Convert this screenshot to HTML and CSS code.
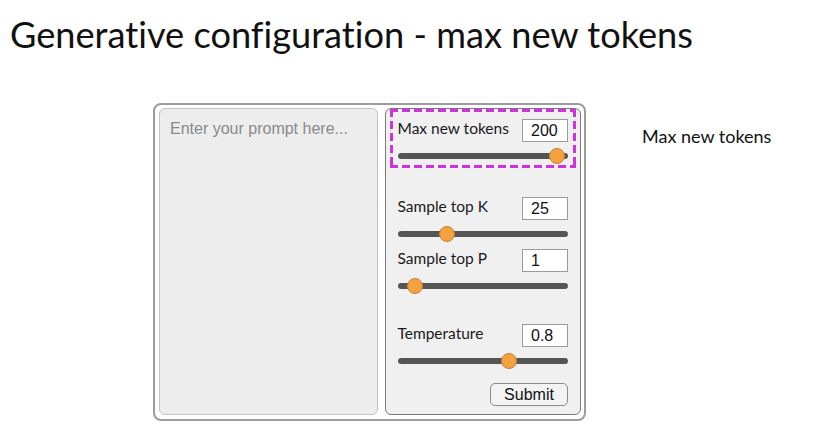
FILE: index.html
```html
<!DOCTYPE html>
<html>
<head>
<meta charset="utf-8">
<link rel="stylesheet" href="styles.css">
</head>
<body>
<h1 class="title">Generative configuration - max new tokens</h1>
<div class="stage">
  <div class="app">
    <div class="prompt">Enter your prompt here...</div>
    <div class="panel">
      <div class="group highlight">
        <div class="row"><span class="label">Max new tokens</span><span class="field">200</span></div>
        <div class="slider"><div class="track"></div><div class="thumb" style="left:151px"></div></div>
      </div>
      <div class="group g-k">
        <div class="row"><span class="label">Sample top K</span><span class="field">25</span></div>
        <div class="slider"><div class="track"></div><div class="thumb" style="left:41px"></div></div>
      </div>
      <div class="group g-p">
        <div class="row"><span class="label">Sample top P</span><span class="field">1</span></div>
        <div class="slider"><div class="track"></div><div class="thumb" style="left:9px"></div></div>
      </div>
      <div class="group g-t">
        <div class="row"><span class="label">Temperature</span><span class="field">0.8</span></div>
        <div class="slider"><div class="track"></div><div class="thumb" style="left:103px"></div></div>
      </div>
      <div class="actions"><span class="submit">Submit</span></div>
    </div>
  </div>
  <div class="note">Max new tokens</div>
</div>
</body>
</html>
```
FILE: styles.css
```css
html, body {
  margin: 0;
  padding: 0;
  background: #ffffff;
}
body {
  font-family: Lato, "Noto Sans", sans-serif;
  color: #1a1a1a;
  font-variant-ligatures: none;
}
.title {
  margin: 0;
  padding: 10px 0 0 10px;
  font-family: Lato, sans-serif;
  font-weight: 400;
  font-size: 36.2px;
  line-height: 48px;
  color: #111;
}
.stage {
  display: flex;
  align-items: flex-start;
  padding-left: 153px;
  margin-top: 45px;
}
.app {
  box-sizing: border-box;
  width: 433px;
  height: 318px;
  border: 2px solid #9c9c9c;
  border-radius: 8px;
  padding: 3px 3px 4px 4px;
  display: flex;
  gap: 7px;
  background: #fff;
}
.prompt {
  box-sizing: border-box;
  width: 220px;
  height: 307px;
  background: #ededed;
  border: 1.5px solid #c2c2c2;
  border-radius: 6px;
  padding: 11px 10px;
  font-family: "Liberation Sans", Arial, sans-serif;
  font-size: 16px;
  color: #8a8a8a;
}
.panel {
  box-sizing: border-box;
  width: 196px;
  height: 307px;
  background: #f0f0f0;
  border: 1px solid #7a7a7a;
  border-radius: 6px;
  padding: 0 4px;
}
.group {
  margin: 0 8px;
}
.highlight {
  margin: 0;
  padding: 10px 8px 4px 8px;
  background:
    linear-gradient(90deg, #cf33df 66%, transparent 0) 0 0 / 12px 3px repeat-x,
    linear-gradient(90deg, #cf33df 66%, transparent 0) 0 100% / 12px 3px repeat-x,
    linear-gradient(180deg, #cf33df 66%, transparent 0) 0 0 / 3px 12px repeat-y,
    linear-gradient(180deg, #cf33df 66%, transparent 0) 100% 0 / 3px 12px repeat-y;
}
.g-k { margin-top: 29px; }
.g-p { margin-top: 7px; }
.g-t { margin-top: 30px; }
.row {
  display: flex;
  align-items: center;
  justify-content: space-between;
  height: 23px;
}
.label {
  margin-left: -1px;
  font-family: Lato, sans-serif;
  font-size: 15.5px;
  color: #1a1a1a;
  padding-bottom: 5px;
}
.field {
  box-sizing: border-box;
  width: 46px;
  height: 23px;
  background: #fff;
  border: 1px solid #9a9a9a;
  padding: 1px 0 0 8px;
  font-family: "Liberation Sans", Arial, sans-serif;
  font-size: 16px;
  line-height: 20px;
  color: #111;
}
.slider {
  position: relative;
  height: 16px;
  margin-top: 6px;
}
.track {
  position: absolute;
  left: 0;
  right: 0;
  top: 5px;
  height: 6px;
  border-radius: 3px;
  background: #555555;
}
.thumb {
  position: absolute;
  top: 0;
  box-sizing: border-box;
  width: 16px;
  height: 16px;
  border-radius: 50%;
  background: #f4a23f;
  border: 1px solid #c9802f;
}
.actions {
  display: flex;
  justify-content: flex-end;
  margin: 14px 8px 0 8px;
}
.submit {
  box-sizing: border-box;
  width: 78px;
  height: 23px;
  border: 1px solid #8c8c8c;
  border-radius: 5px;
  background: #f3f3f3;
  text-align: center;
  font-family: "Liberation Sans", Arial, sans-serif;
  font-size: 16px;
  line-height: 21px;
  color: #111;
}
.note {
  margin-left: 56px;
  margin-top: 22px;
  font-family: Lato, sans-serif;
  font-size: 18px;
  color: #111;
}
```
